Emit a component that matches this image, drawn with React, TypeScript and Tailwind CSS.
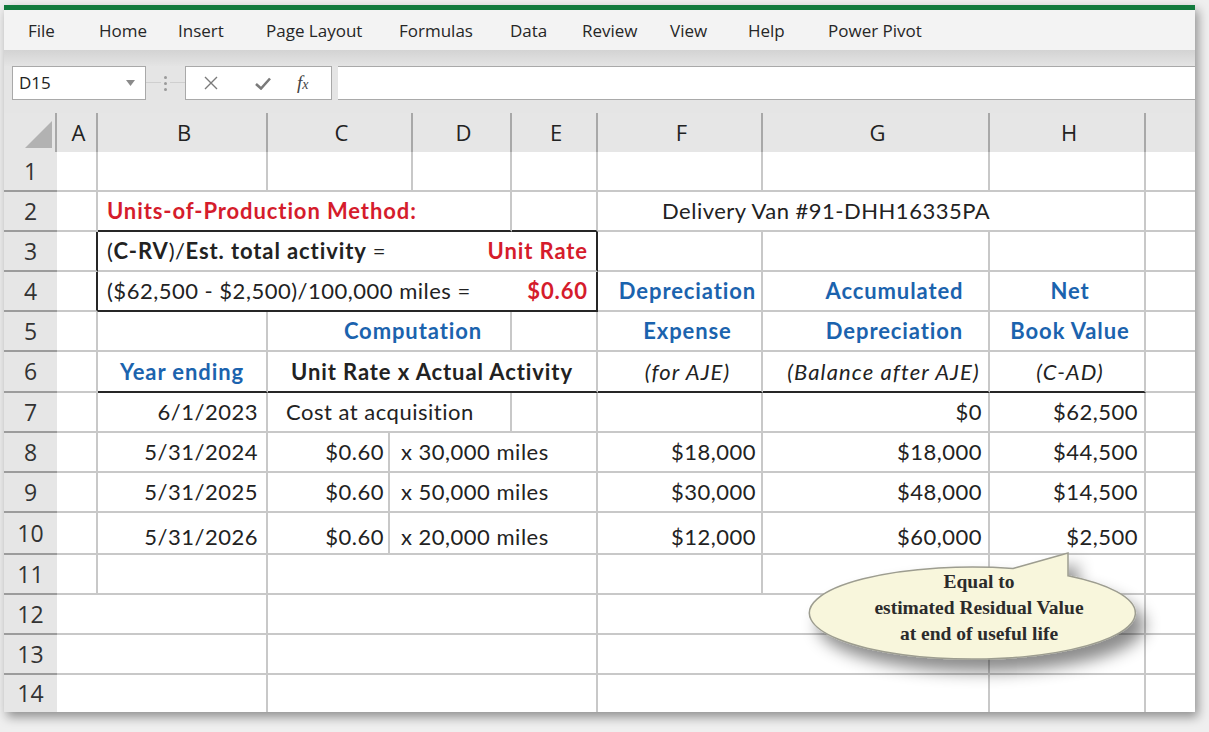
import React from 'react';

type Line = 'g' | 'k' | 'n';

const RB: Record<Line, string> = {
  g: 'border-r-2 border-r-[#c8c8c8]',
  k: 'border-r-2 border-r-[#262626]',
  n: '',
};
const BB: Record<Line, string> = {
  g: 'border-b-2 border-b-[#c8c8c8]',
  k: 'border-b-2 border-b-[#262626]',
  n: '',
};

type CellDef = { w: string; r?: Line; b?: Line; c?: string; t?: React.ReactNode };
type RowDef = { n: number; h: string; cc?: string; last?: boolean; cells: CellDef[] };

// column widths (px) — row header 53, then A..I
const A = 'w-[41px]';
const B = 'w-[170px]';
const C = 'w-[145px]';
const D = 'w-[99px]';
const E = 'w-[86px]';
const F = 'w-[165px]';
const G = 'w-[227px]';
const H = 'w-[156px]';
const I = 'w-[49px]';

const bold = 'font-bold tracking-[0.9px]';
const red = `${bold} text-[#d51c2c]`;
const blue = `${bold} text-[#1b63ae]`;
const ital = 'italic tracking-[1.1px]';
const right = 'justify-end';

const yearRow = (n: number, date: string, miles: string, exp: string, acc: string, nbv: string, cc?: string): RowDef => ({
  n,
  h: n === 10 ? 'h-[42px]' : 'h-[40px]',
  cc,
  cells: [
    { w: A },
    { w: B, c: `${right} pr-2`, t: date },
    { w: 'w-[122px]', c: `${right} pr-1`, t: '$0.60' },
    { w: 'w-[208px]', c: 'pl-[11px]', t: miles },
    { w: F, c: `${right} pr-[5px]`, t: exp },
    { w: G, c: `${right} pr-[6px]`, t: acc },
    { w: H, c: `${right} pr-[6px]`, t: nbv },
    { w: I, r: 'n' },
  ],
});

const rows: RowDef[] = [
  {
    n: 1,
    h: 'h-[40px]',
    cells: [{ w: A }, { w: B }, { w: C }, { w: D }, { w: E }, { w: F }, { w: G }, { w: H }, { w: I, r: 'n' }],
  },
  {
    n: 2,
    h: 'h-[40px]',
    cells: [
      { w: A },
      { w: 'w-[414px]', b: 'k', c: `pl-[9px] ${red}`, t: 'Units-of-Production Method:' },
      { w: E, b: 'k' },
      { w: 'w-[548px]', c: 'pl-[64px]', t: 'Delivery Van #91-DHH16335PA' },
      { w: I, r: 'n' },
    ],
  },
  {
    n: 3,
    h: 'h-[40px]',
    cells: [
      { w: A, r: 'k' },
      {
        w: 'w-[500px]',
        r: 'k',
        c: 'justify-between pl-[9px] pr-2',
        t: (
          <>
            <span>
              (<b className={bold}>C-RV</b>)/<b className={bold}>Est. total activity</b> =
            </span>
            <span className={red}>Unit Rate</span>
          </>
        ),
      },
      { w: F },
      { w: G },
      { w: H },
      { w: I, r: 'n' },
    ],
  },
  {
    n: 4,
    h: 'h-[40px]',
    cells: [
      { w: A, r: 'k' },
      {
        w: 'w-[500px]',
        r: 'k',
        b: 'k',
        c: 'justify-between pl-[9px] pr-2',
        t: (
          <>
            <span>($62,500 - $2,500)/100,000 miles =</span>
            <span className={red}>$0.60</span>
          </>
        ),
      },
      { w: F, c: `justify-center pl-4 ${blue}`, t: 'Depreciation' },
      { w: G, c: `justify-center pl-[38px] ${blue}`, t: 'Accumulated' },
      { w: H, c: `justify-center pl-[6px] ${blue}`, t: 'Net' },
      { w: I, r: 'n' },
    ],
  },
  {
    n: 5,
    h: 'h-[40px]',
    cells: [
      { w: A },
      { w: B },
      { w: 'w-[244px]', c: `justify-center pl-[48px] ${blue}`, t: 'Computation' },
      { w: E },
      { w: F, c: `justify-center pl-4 ${blue}`, t: 'Expense' },
      { w: G, c: `justify-center pl-[38px] ${blue}`, t: 'Depreciation' },
      { w: H, c: `justify-center pl-[6px] ${blue}`, t: 'Book Value' },
      { w: I, r: 'n' },
    ],
  },
  {
    n: 6,
    h: 'h-[41px]',
    cells: [
      { w: A },
      { w: B, b: 'k', c: `justify-center ${blue}`, t: 'Year ending' },
      { w: 'w-[330px]', b: 'k', c: `justify-center ${bold}`, t: 'Unit Rate x Actual Activity' },
      { w: F, b: 'k', c: `justify-center pl-4 ${ital}`, t: '(for AJE)' },
      { w: G, b: 'k', c: `justify-center pl-[16px] ${ital}`, t: '(Balance after AJE)' },
      { w: H, b: 'k', c: `justify-center pl-[6px] ${ital}`, t: '(C-AD)' },
      { w: I, r: 'n' },
    ],
  },
  {
    n: 7,
    h: 'h-[40px]',
    cells: [
      { w: A },
      { w: B, c: `${right} pr-2`, t: '6/1/2023' },
      { w: 'w-[244px]', c: 'pl-[18px]', t: 'Cost at acquisition' },
      { w: E },
      { w: F },
      { w: G, c: `${right} pr-[6px]`, t: '$0' },
      { w: H, c: `${right} pr-[6px]`, t: '$62,500' },
      { w: I, r: 'n' },
    ],
  },
  yearRow(8, '5/31/2024', 'x 30,000 miles', '$18,000', '$18,000', '$44,500'),
  yearRow(9, '5/31/2025', 'x 50,000 miles', '$30,000', '$48,000', '$14,500'),
  yearRow(10, '5/31/2026', 'x 20,000 miles', '$12,000', '$60,000', '$2,500', 'pt-[7px]'),
  {
    n: 11,
    h: 'h-[40px]',
    cells: [{ w: A }, { w: B }, { w: 'w-[330px]' }, { w: F }, { w: G }, { w: H }, { w: I, r: 'n' }],
  },
  ...[12, 13, 14].map(
    (n): RowDef => ({
      n,
      h: n === 14 ? 'h-[37px]' : 'h-[40px]',
      last: n === 14,
      cells: [
        { w: 'w-[211px]', b: n === 14 ? 'n' : 'g' },
        { w: 'w-[330px]', b: n === 14 ? 'n' : 'g' },
        { w: 'w-[392px]', b: n === 14 ? 'n' : 'g' },
        { w: H, b: n === 14 ? 'n' : 'g' },
        { w: I, r: 'n', b: n === 14 ? 'n' : 'g' },
      ],
    })
  ),
];

const menu = [
  { label: 'File', w: 'w-[71px]' },
  { label: 'Home', w: 'w-[79px]' },
  { label: 'Insert', w: 'w-[88px]' },
  { label: 'Page Layout', w: 'w-[133px]' },
  { label: 'Formulas', w: 'w-[111px]' },
  { label: 'Data', w: 'w-[72px]' },
  { label: 'Review', w: 'w-[88px]' },
  { label: 'View', w: 'w-[78px]' },
  { label: 'Help', w: 'w-[80px]' },
  { label: 'Power Pivot', w: 'w-[120px]' },
];

const colHeads = [
  { l: 'A', w: A },
  { l: 'B', w: B },
  { l: 'C', w: C },
  { l: 'D', w: D },
  { l: 'E', w: E },
  { l: 'F', w: F },
  { l: 'G', w: G },
  { l: 'H', w: H },
  { l: '', w: I },
];

function Cell({ w, r = 'g', b = 'g', c = '', t, cc = '' }: CellDef & { cc?: string }) {
  return (
    <div className={`flex h-full shrink-0 items-center whitespace-nowrap ${w} ${RB[r]} ${BB[b]} ${c} ${cc}`}>{t}</div>
  );
}

function Callout() {
  return (
    <>
      <svg className="absolute left-[800px] top-[540px]" width="390" height="170" viewBox="0 0 390 170">
        <defs>
          <filter id="sh" x="-20%" y="-40%" width="150%" height="200%">
            <feDropShadow dx="9" dy="12" stdDeviation="8" floodColor="#000" floodOpacity="0.45" />
          </filter>
        </defs>
        <path
          d="M 213 28.5 L 268 13 L 268 35.8 A 163 46 0 1 1 213 28.5 Z"
          fill="#f8f6dc"
          stroke="#9d9d90"
          strokeWidth="1.5"
          filter="url(#sh)"
        />
      </svg>
      <div className="absolute left-[819px] top-[569px] w-[320px] text-center font-['Liberation_Serif',serif] text-[19.5px] font-bold leading-[26px] text-[#2b2b2b]">
        <div>Equal to</div>
        <div>estimated Residual Value</div>
        <div>at end of useful life</div>
      </div>
    </>
  );
}

export default function App() {
  return (
    <div className="relative h-[732px] w-[1209px] overflow-hidden bg-[#efefef] pl-[4px] pt-[5px]">
      <div className="flex h-[707px] w-[1191px] flex-col bg-white shadow-[3px_5px_10px_rgba(0,0,0,0.4)]">
        {/* title strip + menu */}
        <div className="h-[5px] bg-[#127a3d]" />
        <div className="flex h-[40px] items-center bg-[#f3f3f3] pl-[24px] pt-[2px] font-['Open_Sans',sans-serif] text-[17px] text-[#262626]">
          {menu.map((m) => (
            <div key={m.label} className={`${m.w} shrink-0`}>
              {m.label}
            </div>
          ))}
        </div>
        <div className="h-[16px] bg-linear-to-b from-[#d3d3d3] to-[#e4e4e4]" />

        {/* formula bar */}
        <div className="flex h-[34px] items-stretch bg-[#e5e5e5] pl-[8px] font-['Open_Sans',sans-serif]">
          <div className="flex w-[134px] shrink-0 items-center justify-between border border-[#a9a9a9] bg-white pl-[6px] pr-[10px] text-[17px] text-[#222]">
            <span>D15</span>
            <svg width="9" height="6" viewBox="0 0 9 6">
              <path d="M0 0 L9 0 L4.5 6 Z" fill="#8a8a8a" />
            </svg>
          </div>
          <div className="relative flex w-[39px] shrink-0 items-center justify-center">
            <div className="absolute left-0 right-0 top-[16px] h-px bg-[#cfcfcf]" />
            <div className="relative flex flex-col gap-[3px] bg-[#e5e5e5] px-[3px]">
              <span className="h-[3px] w-[3px] rounded-full bg-[#9a9a9a]" />
              <span className="h-[3px] w-[3px] rounded-full bg-[#9a9a9a]" />
              <span className="h-[3px] w-[3px] rounded-full bg-[#9a9a9a]" />
            </div>
          </div>
          <div className="flex w-[147px] shrink-0 items-center border border-[#a9a9a9] bg-white">
            <svg className="ml-[18px]" width="14" height="14" viewBox="0 0 14 14">
              <path d="M1 1 L13 13 M13 1 L1 13" stroke="#7a7a7a" strokeWidth="1.4" />
            </svg>
            <svg className="ml-[37px]" width="16" height="13" viewBox="0 0 16 13">
              <path d="M1 7 L6 11.5 L15 1.5" stroke="#7a7a7a" strokeWidth="2.6" fill="none" />
            </svg>
            <span className="ml-[26px] font-['Liberation_Serif',serif] text-[19px] italic text-[#444]">
              f<span className="text-[14px]">x</span>
            </span>
          </div>
          <div className="ml-[6px] flex-1 border-y border-[#a9a9a9] bg-white" />
        </div>
        <div className="h-[13px] bg-[#e5e5e5]" />

        {/* column headers */}
        <div className="flex h-[39px] bg-[#e6e6e6] font-['Open_Sans',sans-serif] text-[22px] text-[#222]">
          <div className="relative w-[53px] shrink-0 border-r-2 border-r-[#a8a8a8]">
            <svg className="absolute left-[21px] top-[8px]" width="28" height="28" viewBox="0 0 28 28">
              <path d="M0 27 L27 27 L27 0 Z" fill="#b2b2b2" />
            </svg>
          </div>
          {colHeads.map((h, i) => (
            <div
              key={i}
              className={`flex shrink-0 items-center justify-center pl-[4px] ${h.w} ${i < 8 ? 'border-r-2 border-r-[#a8a8a8]' : ''}`}
            >
              {h.l}
            </div>
          ))}
        </div>

        {/* sheet */}
        <div className="flex flex-col font-['Lato',sans-serif] text-[22px] leading-none tracking-[0.5px] text-[#222]">
          {rows.map((row) => (
            <div key={row.n} className={`flex ${row.h}`}>
              <div
                className={`flex h-full w-[53px] shrink-0 items-center justify-center bg-[#e6e6e6] font-['Open_Sans',sans-serif] text-[23px] tracking-normal text-[#333] ${
                  row.last ? '' : 'border-b-2 border-b-[#9c9c9c]'
                }`}
              >
                {row.n}
              </div>
              {row.cells.map((cell, i) => (
                <Cell key={i} {...cell} cc={row.cc} />
              ))}
            </div>
          ))}
        </div>
      </div>
      <Callout />
    </div>
  );
}
